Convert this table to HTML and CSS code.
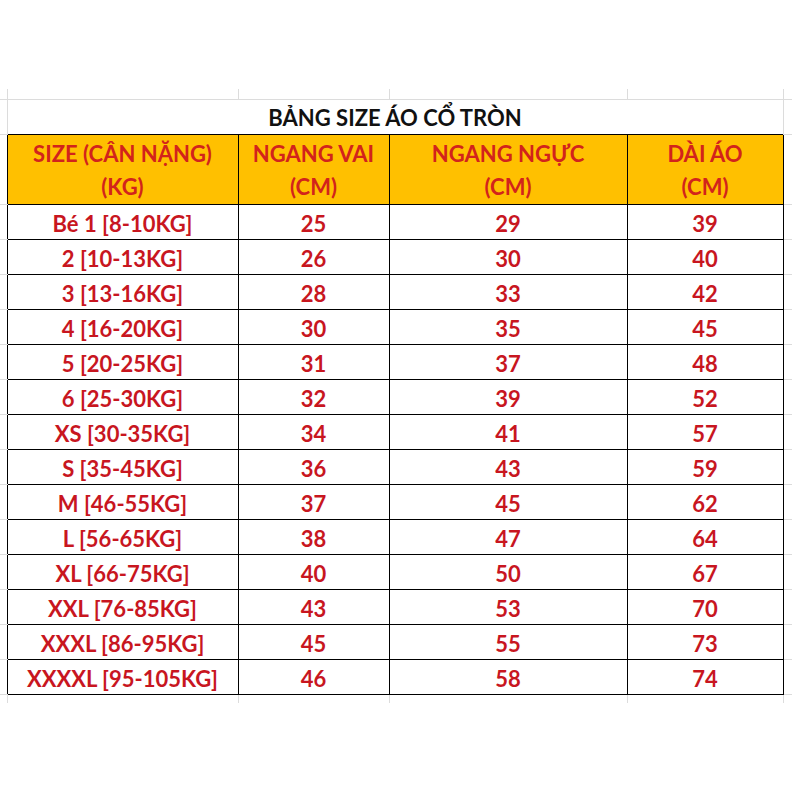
FILE: index.html
```html
<!DOCTYPE html>
<html lang="vi">
<head>
<meta charset="utf-8">
<title>Bảng size áo cổ tròn</title>
<link rel="stylesheet" href="styles.css">
</head>
<body>
<table class="sheet">
  <colgroup>
    <col class="col-g1"><col class="col-a"><col class="col-b"><col class="col-c"><col class="col-d"><col class="col-g2">
  </colgroup>
  <tr class="stub-top">
    <td class="gut"></td><td class="vl"></td><td class="vl"></td><td class="vl"></td><td class="vl vr"></td><td class="gut"></td>
  </tr>
  <tr class="title-row">
    <td class="gut gt gb"></td>
    <td colspan="4" class="title">BẢNG SIZE ÁO CỔ TRÒN</td>
    <td class="gut gt gb"></td>
  </tr>
  <tr class="head">
    <td class="gut gb"></td>
    <td class="hc">SIZE (CÂN NẶNG)<br>(KG)</td>
    <td class="hc">NGANG VAI<br>(CM)</td>
    <td class="hc">NGANG NGỰC<br>(CM)</td>
    <td class="hc">DÀI ÁO<br>(CM)</td>
    <td class="gut gb"></td>
  </tr>
  <tr class="row"><td class="gut gb"></td><td class="dc">Bé 1 [8-10KG]</td><td class="dc">25</td><td class="dc">29</td><td class="dc">39</td><td class="gut gb"></td></tr>
  <tr class="row"><td class="gut gb"></td><td class="dc">2 [10-13KG]</td><td class="dc">26</td><td class="dc">30</td><td class="dc">40</td><td class="gut gb"></td></tr>
  <tr class="row"><td class="gut gb"></td><td class="dc">3 [13-16KG]</td><td class="dc">28</td><td class="dc">33</td><td class="dc">42</td><td class="gut gb"></td></tr>
  <tr class="row"><td class="gut gb"></td><td class="dc">4 [16-20KG]</td><td class="dc">30</td><td class="dc">35</td><td class="dc">45</td><td class="gut gb"></td></tr>
  <tr class="row"><td class="gut gb"></td><td class="dc">5 [20-25KG]</td><td class="dc">31</td><td class="dc">37</td><td class="dc">48</td><td class="gut gb"></td></tr>
  <tr class="row"><td class="gut gb"></td><td class="dc">6 [25-30KG]</td><td class="dc">32</td><td class="dc">39</td><td class="dc">52</td><td class="gut gb"></td></tr>
  <tr class="row"><td class="gut gb"></td><td class="dc">XS [30-35KG]</td><td class="dc">34</td><td class="dc">41</td><td class="dc">57</td><td class="gut gb"></td></tr>
  <tr class="row"><td class="gut gb"></td><td class="dc">S [35-45KG]</td><td class="dc">36</td><td class="dc">43</td><td class="dc">59</td><td class="gut gb"></td></tr>
  <tr class="row"><td class="gut gb"></td><td class="dc">M [46-55KG]</td><td class="dc">37</td><td class="dc">45</td><td class="dc">62</td><td class="gut gb"></td></tr>
  <tr class="row"><td class="gut gb"></td><td class="dc">L [56-65KG]</td><td class="dc">38</td><td class="dc">47</td><td class="dc">64</td><td class="gut gb"></td></tr>
  <tr class="row"><td class="gut gb"></td><td class="dc">XL [66-75KG]</td><td class="dc">40</td><td class="dc">50</td><td class="dc">67</td><td class="gut gb"></td></tr>
  <tr class="row"><td class="gut gb"></td><td class="dc">XXL [76-85KG]</td><td class="dc">43</td><td class="dc">53</td><td class="dc">70</td><td class="gut gb"></td></tr>
  <tr class="row"><td class="gut gb"></td><td class="dc">XXXL [86-95KG]</td><td class="dc">45</td><td class="dc">55</td><td class="dc">73</td><td class="gut gb"></td></tr>
  <tr class="row"><td class="gut gb"></td><td class="dc">XXXXL [95-105KG]</td><td class="dc">46</td><td class="dc">58</td><td class="dc">74</td><td class="gut gb"></td></tr>
  <tr class="stub-bottom">
    <td class="gut"></td><td class="vl"></td><td class="vl"></td><td class="vl"></td><td class="vl vr"></td><td class="gut"></td>
  </tr>
</table>
</body>
</html>
```
FILE: styles.css
```css
html, body {
  margin: 0;
  padding: 0;
  background: #ffffff;
}

body {
  padding-top: 89px;
  font-family: Lato, "Open Sans", "Noto Sans", sans-serif;
  font-weight: 700;
}

.sheet {
  border-collapse: collapse;
  table-layout: fixed;
  width: 792px;
}

.col-g1 { width: 7px; }
.col-a { width: 231px; }
.col-b { width: 151px; }
.col-c { width: 238px; }
.col-d { width: 156px; }
.col-g2 { width: 9px; }

td {
  padding: 0;
  text-align: center;
  white-space: nowrap;
}

.stub-top td { height: 10px; }
.stub-bottom td { height: 8px; }

.vl { border-left: 1px solid #dcdcdc; }
.vr { border-right: 1px solid #dcdcdc; }

.gt { border-top: 1px solid #dcdcdc; }
.gb { border-bottom: 1px solid #dcdcdc; }

.title {
  height: 32px;
  border-top: 1px solid #dcdcdc;
  border-left: 1px solid #dcdcdc;
  border-right: 1px solid #dcdcdc;
  color: #111111;
  font-size: 22px;
  padding-top: 2px;
  line-height: 30px;
}

.hc {
  height: 69px;
  background: #ffc000;
  border: 1px solid #000;
  color: #d2231c;
  font-size: 22px;
  line-height: 33px;
}

.dc {
  height: 30px;
  border: 1px solid #000;
  color: #c8161f;
  font-size: 22px;
  padding-top: 4px;
  line-height: 30px;
}
```
